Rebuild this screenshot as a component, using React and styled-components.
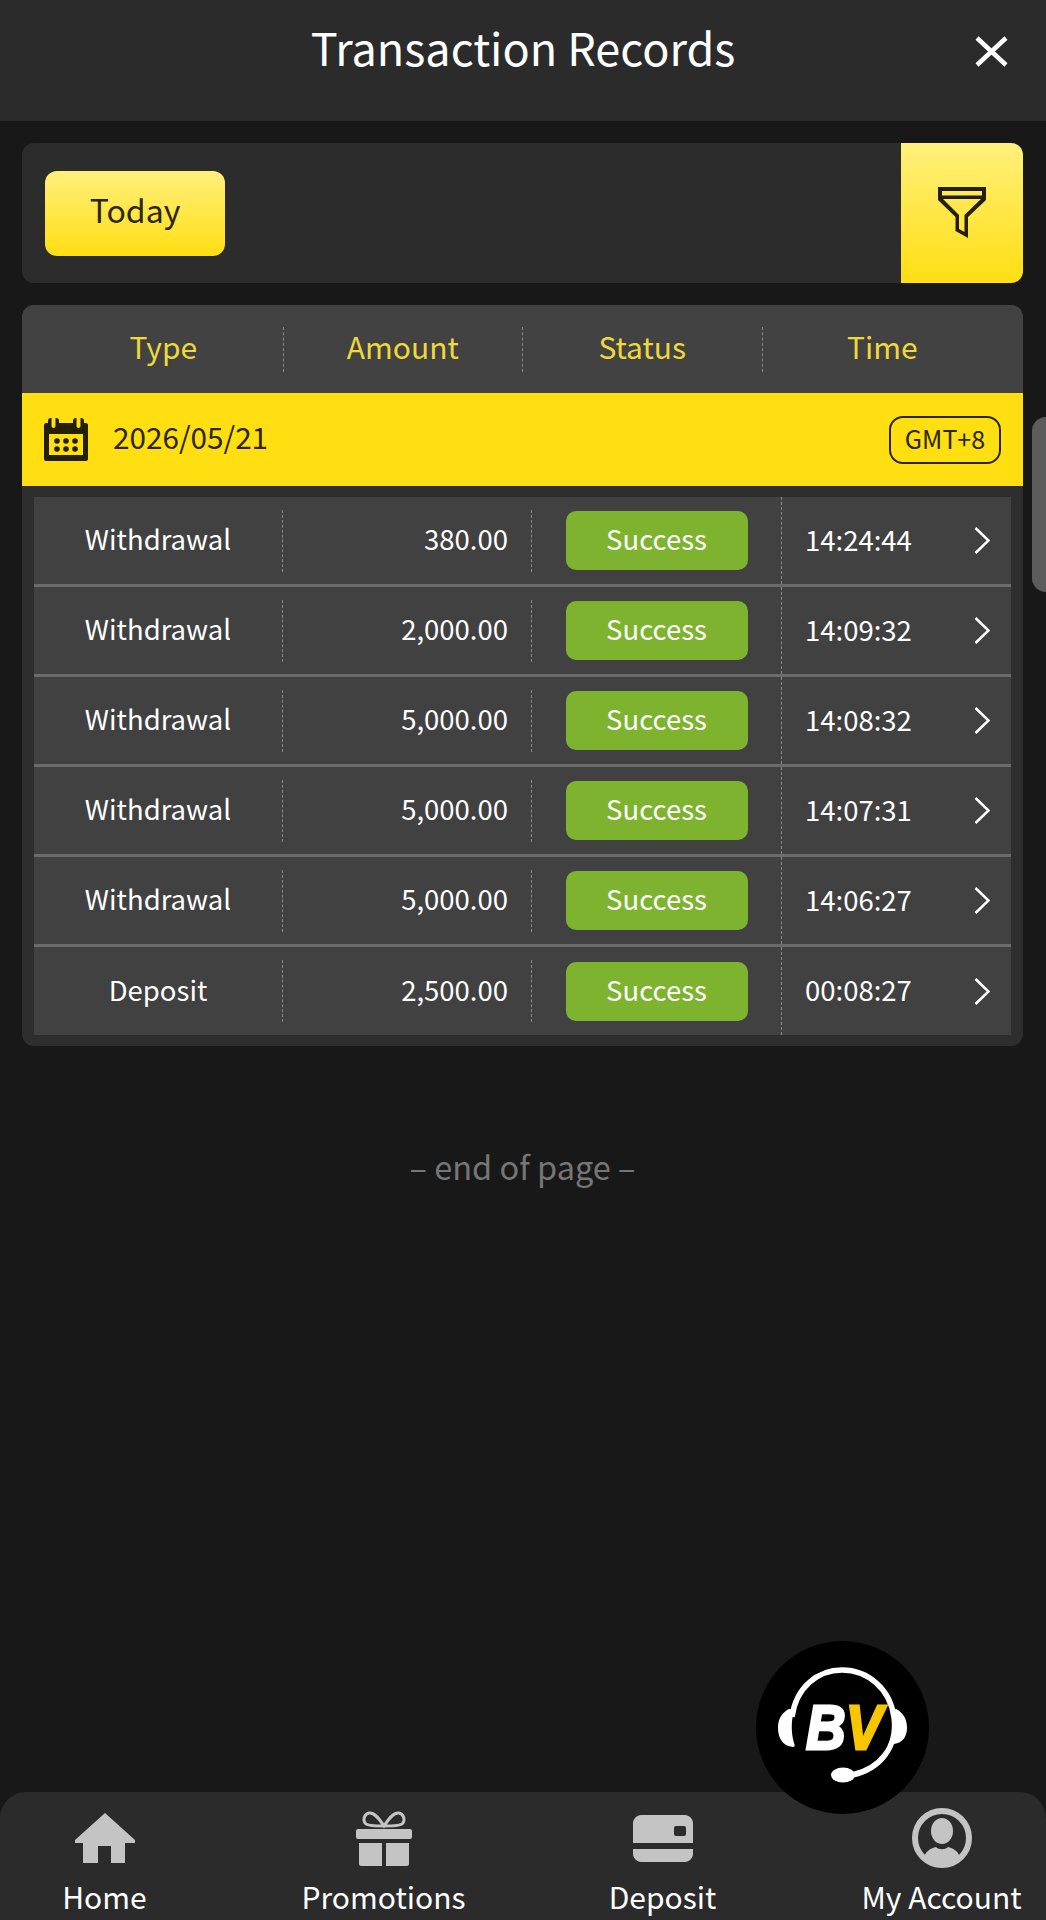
import React from 'react';
import styled, { createGlobalStyle } from 'styled-components';

const rows = [
    { type: 'Withdrawal', amount: '380.00', time: '14:24:44' },
    { type: 'Withdrawal', amount: '2,000.00', time: '14:09:32' },
    { type: 'Withdrawal', amount: '5,000.00', time: '14:08:32' },
    { type: 'Withdrawal', amount: '5,000.00', time: '14:07:31' },
    { type: 'Withdrawal', amount: '5,000.00', time: '14:06:27' },
    { type: 'Deposit', amount: '2,500.00', time: '00:08:27' },
];

const App = () => {
    return (
        <Page>
            <GlobalStyle />
            <Header>
                <Title>Transaction Records</Title>
                <CloseButton>
                    <svg width="33" height="31" viewBox="0 0 33 31">
                        <path d="M2 2L31 29M31 2L2 29" stroke="#fff" strokeWidth="4.5" fill="none" />
                    </svg>
                </CloseButton>
            </Header>
            <Main>
                <FilterCard>
                    <TodayButton>Today</TodayButton>
                    <FilterButton>
                        <svg width="48" height="51" viewBox="0 0 48 51">
                            <path
                                fillRule="evenodd"
                                d="M0 0H48V13L30 30V51L17.5 44V30L0 13ZM4 4V8.5H44V4ZM5 12L21 28V42L26.5 45V28L43 12Z"
                                fill="#231f00"
                            />
                        </svg>
                    </FilterButton>
                </FilterCard>
                <TableCard>
                    <TableHead>
                        <HeadCell>Type</HeadCell>
                        <HeadCell>Amount</HeadCell>
                        <HeadCell>Status</HeadCell>
                        <HeadCell $last>Time</HeadCell>
                    </TableHead>
                    <DateBar>
                        <DateLabel>
                            <svg width="44" height="43" viewBox="0 0 44 43">
                                <path
                                    fillRule="evenodd"
                                    d="M2 5H4V3C4 1 5 0 7 0H12C14 0 15 1 15 3V5H29V3C29 1 30 0 32 0H37C39 0 40 1 40 3V5H42C43 5 44 6 44 7V41C44 42 43 43 42 43H2C1 43 0 42 0 41V7C0 6 1 5 2 5ZM7.5 0V8C7.5 10.5 11.5 10.5 11.5 8V0ZM32.5 0V8C32.5 10.5 36.5 10.5 36.5 8V0ZM5 16V37H39V16Z"
                                    fill="#231f00"
                                />
                                {[13, 22, 31].map((x) =>
                                    [23, 31].map((y) => <circle key={`${x}-${y}`} cx={x} cy={y} r="2.8" fill="#231f00" />)
                                )}
                            </svg>
                            <DateText>2026/05/21</DateText>
                        </DateLabel>
                        <ZoneBadge>GMT+8</ZoneBadge>
                    </DateBar>
                    <RowList>
                        {rows.map((row, i) => (
                            <Row key={i} $last={i === rows.length - 1}>
                                <TypeCell>{row.type}</TypeCell>
                                <AmountCell>{row.amount}</AmountCell>
                                <StatusCell>
                                    <StatusPill>Success</StatusPill>
                                </StatusCell>
                                <TimeCell>
                                    <TimeText>{row.time}</TimeText>
                                    <svg width="16" height="27" viewBox="0 0 16 27">
                                        <path d="M1.5 1L14.5 13.5L1.5 26" fill="none" stroke="#fff" strokeWidth="2.5" />
                                    </svg>
                                </TimeCell>
                            </Row>
                        ))}
                    </RowList>
                </TableCard>
                <EndNote>– end of page –</EndNote>
            </Main>
            <BottomNav>
                <NavItem>
                    <NavIcon>
                        <svg width="60" height="50" viewBox="0 0 60 50">
                            <path
                                d="M30 0L60 27V30H50V50H36V33H23V50H8V30H0V27Z"
                                fill="#c4c4c4"
                            />
                        </svg>
                    </NavIcon>
                    <NavLabel>Home</NavLabel>
                </NavItem>
                <NavItem>
                    <NavIcon>
                        <svg width="56" height="55" viewBox="0 0 56 55">
                            <path
                                d="M28 15C24 9 19 1 13 2C8 3 7 9 9 12C11 15 20 15 28 15C36 15 45 15 47 12C49 9 48 3 43 2C37 1 32 9 28 15Z"
                                fill="none"
                                stroke="#c4c4c4"
                                strokeWidth="3"
                            />
                            <rect x="0" y="18" width="56" height="10" rx="2" fill="#c4c4c4" />
                            <path d="M3 32H26V55H5C4 55 3 54 3 53ZM30 32H53V53C53 54 52 55 51 55H30Z" fill="#c4c4c4" />
                        </svg>
                    </NavIcon>
                    <NavLabel>Promotions</NavLabel>
                </NavItem>
                <NavItem>
                    <NavIcon>
                        <svg width="60" height="47" viewBox="0 0 60 47">
                            <path
                                d="M8 0H52C56 0 60 4 60 8V28H0V8C0 4 4 0 8 0Z"
                                fill="#c4c4c4"
                            />
                            <rect x="41" y="11" width="12" height="10" rx="2" fill="#2b2b2b" />
                            <path d="M0 34H60V39C60 43 56 47 52 47H8C4 47 0 43 0 39Z" fill="#c4c4c4" />
                        </svg>
                    </NavIcon>
                    <NavLabel>Deposit</NavLabel>
                </NavItem>
                <NavItem>
                    <NavIcon>
                        <svg width="60" height="60" viewBox="0 0 60 60">
                            <circle cx="30" cy="30" r="27" fill="none" stroke="#c4c4c4" strokeWidth="6" />
                            <ellipse cx="30" cy="23" rx="11" ry="13" fill="#c4c4c4" />
                            <path d="M12 49C14 43 19 40 24 39C27 42 33 42 36 39C41 40 46 43 48 49C43 53 37 55 30 55C23 55 17 53 12 49Z" fill="#c4c4c4" />
                        </svg>
                    </NavIcon>
                    <NavLabel>My Account</NavLabel>
                </NavItem>
            </BottomNav>
            <ScrollHandle />
            <ChatButton>
                <svg width="173" height="173" viewBox="0 0 173 173">
                    <path d="M36 76C40 46 62 29 86 29C112 29 134 48 138 76C142 106 124 128 96 134" fill="none" stroke="#fff" strokeWidth="5.5" />
                    <path d="M31 69C24 74 22 80 22 87C22 96 26 105 37 106C39 106 39 104 38 102C35 92 35 80 38 70C37 68 33 67 31 69Z" fill="#fff" />
                    <path d="M142 69C149 74 151 80 151 87C151 95 147 102 138 103C135 103 135 101 136 99C139 90 139 80 136 71C137 68 140 67 142 69Z" fill="#fff" />
                    <ellipse cx="87" cy="134" rx="12" ry="7.5" fill="#fff" />
                    <LogoText transform="translate(50 108) scale(1 1.15)">
                        <tspan fill="#fff" stroke="#fff" strokeWidth="2.5">B</tspan>
                        <tspan fill="#f7c600" stroke="#f7c600" strokeWidth="2.5">V</tspan>
                    </LogoText>
                </svg>
            </ChatButton>
        </Page>
    );
};

const GlobalStyle = createGlobalStyle`
    html, body {
        margin: 0;
        padding: 0;
        background: #181818;
    }
    * {
        box-sizing: border-box;
    }
`;

const Page = styled.div`
    position: relative;
    width: 1046px;
    height: 1920px;
    overflow: hidden;
    display: flex;
    flex-direction: column;
    background: #181818;
    font-family: "Noto Sans CJK SC", "Noto Sans", sans-serif;
`;

const Header = styled.header`
    height: 121px;
    flex-shrink: 0;
    display: grid;
    grid-template-columns: 1fr auto 1fr;
    align-items: start;
    padding: 17px 38px 0;
    background: #2b2b2b;
`;

const Title = styled.h1`
    grid-column: 2;
    margin: 0;
    font-size: 45px;
    font-weight: 400;
    line-height: 60px;
    color: #fff;
`;

const CloseButton = styled.div`
    grid-column: 3;
    justify-self: end;
    display: flex;
    padding-top: 19px;
`;

const Main = styled.main`
    flex: 1;
    padding: 22px 23px 0 22px;
`;

const FilterCard = styled.section`
    height: 140px;
    display: flex;
    align-items: center;
    justify-content: space-between;
    padding-left: 23px;
    border-radius: 12px;
    overflow: hidden;
    background: #2c2c2c;
`;

const TodayButton = styled.div`
    width: 180px;
    height: 85px;
    display: flex;
    align-items: center;
    justify-content: center;
    padding-bottom: 8px;
    border-radius: 12px;
    background: linear-gradient(#fff07c, #ffde12);
    color: #2b2600;
    font-size: 32px;
`;

const FilterButton = styled.div`
    width: 122px;
    height: 100%;
    display: flex;
    align-items: center;
    justify-content: center;
    padding-bottom: 2px;
    background: linear-gradient(#fff07c, #ffde12);
`;

const TableCard = styled.section`
    margin-top: 22px;
    border-radius: 12px;
    overflow: hidden;
    background: #2e2e2e;
`;

const TableHead = styled.div`
    height: 88px;
    display: grid;
    grid-template-columns: repeat(4, 1fr);
    align-items: center;
    padding: 0 21px 0 22px;
    background: #424242;
`;

const HeadCell = styled.div`
    height: 45px;
    display: flex;
    align-items: center;
    justify-content: center;
    padding-bottom: 7px;
    font-size: 30px;
    color: #efd93a;
    border-right: ${(p) => (p.$last ? 'none' : '1px dashed #8a8a8a')};
`;

const DateBar = styled.div`
    height: 93px;
    display: flex;
    align-items: center;
    justify-content: space-between;
    padding: 0 22px;
    background: #ffde12;
`;

const DateLabel = styled.div`
    display: flex;
    align-items: center;
    gap: 25px;
`;

const DateText = styled.span`
    padding-bottom: 7px;
    font-size: 29.7px;
    color: #2b2600;
`;

const ZoneBadge = styled.div`
    width: 112px;
    height: 48px;
    display: flex;
    align-items: center;
    justify-content: center;
    padding-bottom: 3px;
    border: 2px solid #2b2600;
    border-radius: 14px;
    font-size: 25px;
    color: #2b2600;
`;

const RowList = styled.div`
    padding: 11px 12px 11px 12px;
`;

const Row = styled.div`
    height: ${(p) => (p.$last ? '88px' : '90px')};
    display: grid;
    grid-template-columns: 249px 249px 250px 1fr;
    align-items: center;
    background: #414141;
    border-bottom: ${(p) => (p.$last ? 'none' : '3px solid #6b6b6b')};
    font-size: 27.5px;
    color: #fff;
`;

const TypeCell = styled.div`
    height: 62px;
    display: flex;
    align-items: center;
    justify-content: center;
    padding-bottom: 5px;
    border-right: 1px dashed #8a8a8a;
`;

const AmountCell = styled.div`
    height: 62px;
    display: flex;
    align-items: center;
    justify-content: flex-end;
    padding: 0 23px 5px 0;
    border-right: 1px dashed #8a8a8a;
`;

const StatusCell = styled.div`
    height: 100%;
    display: flex;
    align-items: center;
    justify-content: center;
    border-right: 1px dashed #8a8a8a;
`;

const StatusPill = styled.div`
    width: 182px;
    height: 59px;
    display: flex;
    align-items: center;
    justify-content: center;
    padding-bottom: 5px;
    border-radius: 10px;
    background: #7db32f;
`;

const TimeCell = styled.div`
    display: flex;
    align-items: center;
    justify-content: space-between;
    padding: 0 21px 0 23px;
`;

const TimeText = styled.span`
    padding-bottom: 4px;
`;

const EndNote = styled.div`
    margin-top: 96px;
    text-align: center;
    font-size: 32.5px;
    line-height: 48px;
    color: #767676;
`;

const BottomNav = styled.nav`
    height: 128px;
    flex-shrink: 0;
    display: grid;
    grid-template-columns: repeat(4, 279px);
    justify-content: center;
    border-radius: 26px 26px 0 0;
    background: #2b2b2b;
`;

const NavItem = styled.div`
    display: flex;
    flex-direction: column;
    align-items: center;
    padding-top: 16px;
`;

const NavIcon = styled.div`
    height: 60px;
    display: flex;
    align-items: center;
    justify-content: center;
`;

const NavLabel = styled.span`
    margin-top: 8px;
    font-size: 30px;
    line-height: 40px;
    color: #fff;
`;

const ScrollHandle = styled.div`
    position: absolute;
    top: 417px;
    right: 0;
    width: 14px;
    height: 175px;
    border-radius: 14px 0 0 14px;
    background: #5c5c5c;
`;

const ChatButton = styled.div`
    position: absolute;
    left: 756px;
    top: 1641px;
    width: 173px;
    height: 173px;
    display: flex;
    border-radius: 50%;
    background: #000;
`;

const LogoText = styled.text`
    font-family: "Liberation Sans", sans-serif;
    font-size: 55px;
    font-weight: 700;
    font-style: italic;
`;

export default App;
